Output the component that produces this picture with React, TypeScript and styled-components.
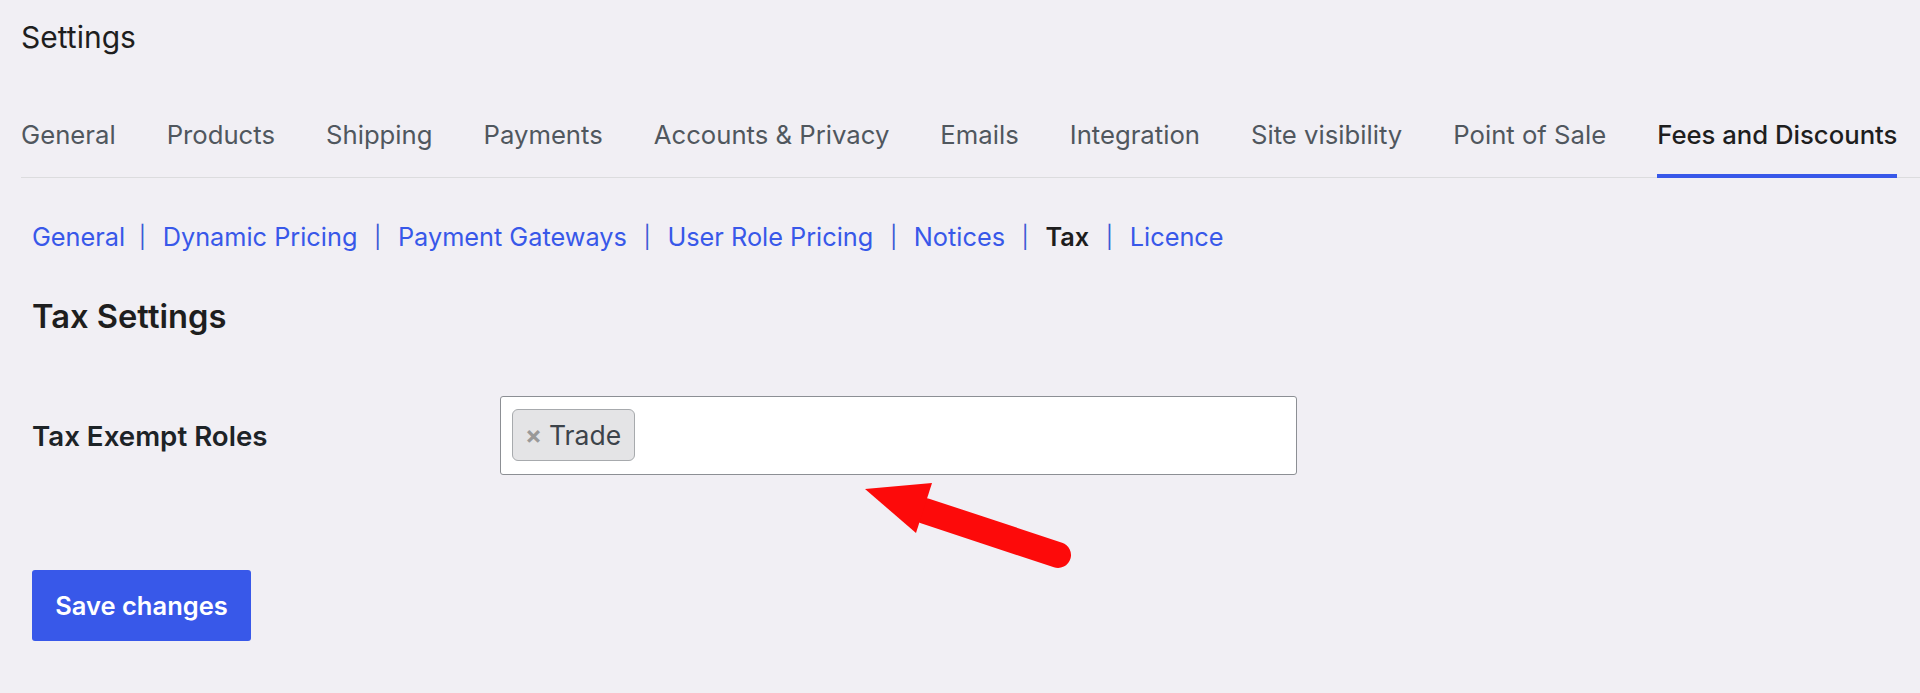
import React from 'react';
import styled, { createGlobalStyle } from 'styled-components';

const GlobalStyle = createGlobalStyle`
  html, body {
    margin: 0;
    padding: 0;
    background: #f1eff4;
  }
  body {
    font-family: Inter, "Noto Sans", "Liberation Sans", sans-serif;
    color: #1e1e1e;
  }
`;

const tabs = [
  'General',
  'Products',
  'Shipping',
  'Payments',
  'Accounts & Privacy',
  'Emails',
  'Integration',
  'Site visibility',
  'Point of Sale',
  'Fees and Discounts',
];

const sections = [
  'General',
  'Dynamic Pricing',
  'Payment Gateways',
  'User Role Pricing',
  'Notices',
  'Tax',
  'Licence',
];

function App() {
  return (
    <Page>
      <GlobalStyle />
      <PageTitle>Settings</PageTitle>
      <TabBar>
        {tabs.map((t) => (
          <Tab key={t} $active={t === 'Fees and Discounts'}>
            {t}
          </Tab>
        ))}
      </TabBar>

      <Content>
        <SubNav>
          {sections.map((s, i) => (
            <React.Fragment key={s}>
              {i > 0 && <Divider $tight={i === 1}>|</Divider>}
              <SubLink $current={s === 'Tax'}>{s}</SubLink>
            </React.Fragment>
          ))}
        </SubNav>

        <SectionTitle>Tax Settings</SectionTitle>

        <FieldRow>
          <FieldLabel>Tax Exempt Roles</FieldLabel>
          <MultiSelect>
            <Chip>
              <ChipRemove>×</ChipRemove>
              Trade
            </Chip>
          </MultiSelect>
        </FieldRow>

        <SaveButton type="button">Save changes</SaveButton>
      </Content>

      <Arrow width="240" height="110" viewBox="0 0 240 110">
        <line
          x1="75"
          y1="36"
          x2="208"
          y2="80"
          stroke="#fd0a0a"
          strokeWidth="26"
          strokeLinecap="round"
        />
        <polygon points="15,14 82,8 66,58" fill="#fd0a0a" />
      </Arrow>
    </Page>
  );
}

const Page = styled.div`
  position: relative;
  min-height: 693px;
  padding: 0 21px;
  box-sizing: border-box;
`;

const PageTitle = styled.h1`
  margin: 0;
  padding-top: 22px;
  font-size: 30px;
  line-height: 30px;
  font-weight: 400;
  color: #1e1e1e;
`;

const TabBar = styled.nav`
  display: flex;
  gap: 51px;
  margin-top: 48px;
  border-bottom: 1px solid #dcdcde;
  margin-right: -21px;
`;

const Tab = styled.a<{ $active?: boolean }>`
  display: block;
  padding: 20px 0 24px;
  margin-bottom: -1px;
  font-size: 25.7px;
  line-height: 30px;
  font-weight: ${(p) => (p.$active ? 500 : 400)};
  color: ${(p) => (p.$active ? '#1e1e1e' : '#50575e')};
  border-bottom: 4px solid ${(p) => (p.$active ? '#3858e9' : 'transparent')};
  white-space: nowrap;
  cursor: pointer;
`;

const Content = styled.div`
  padding-left: 11px;
`;

const SubNav = styled.div`
  display: flex;
  align-items: center;
  gap: 16.6px;
  margin-top: 44px;
  font-size: 25.3px;
  line-height: 30px;
`;

const SubLink = styled.a<{ $current?: boolean }>`
  color: ${(p) => (p.$current ? '#1e1e1e' : '#3858e9')};
  font-weight: ${(p) => (p.$current ? 600 : 400)};
  cursor: pointer;
`;

const Divider = styled.span<{ $tight?: boolean }>`
  color: #3c5ad6;
  font-size: 22px;
  margin-left: ${(p) => (p.$tight ? '-3px' : '0')};
`;

const SectionTitle = styled.h2`
  margin: 47px 0 0;
  font-size: 32.7px;
  line-height: 34px;
  font-weight: 600;
  color: #1e1e1e;
`;

const FieldRow = styled.div`
  display: flex;
  align-items: center;
  margin-top: 63px;
`;

const FieldLabel = styled.label`
  width: 468px;
  flex-shrink: 0;
  font-size: 27.7px;
  line-height: 30px;
  font-weight: 600;
  color: #1d2327;
`;

const MultiSelect = styled.div`
  width: 797px;
  height: 79px;
  box-sizing: border-box;
  display: flex;
  align-items: flex-start;
  padding: 12px 11px;
  background: #fff;
  border: 1px solid #8c8f94;
  border-radius: 3px;
`;

const Chip = styled.span`
  display: inline-flex;
  align-items: center;
  gap: 7px;
  height: 52px;
  box-sizing: border-box;
  padding: 0 13px 0 12px;
  background: #e4e4e6;
  border: 1px solid #a7aaad;
  border-radius: 6px;
  font-size: 26.5px;
  color: #3c434a;
`;

const ChipRemove = styled.span`
  color: #999;
  font-weight: 700;
  font-size: 25px;
`;

const SaveButton = styled.button`
  display: block;
  margin-top: 95px;
  width: 219px;
  height: 71px;
  padding: 0;
  border: none;
  border-radius: 3px;
  background: #3858e9;
  color: #fff;
  font-family: inherit;
  font-size: 25.5px;
  font-weight: 600;
  cursor: pointer;
`;

const Arrow = styled.svg`
  position: absolute;
  left: 850px;
  top: 475px;
  pointer-events: none;
`;

export default App;
